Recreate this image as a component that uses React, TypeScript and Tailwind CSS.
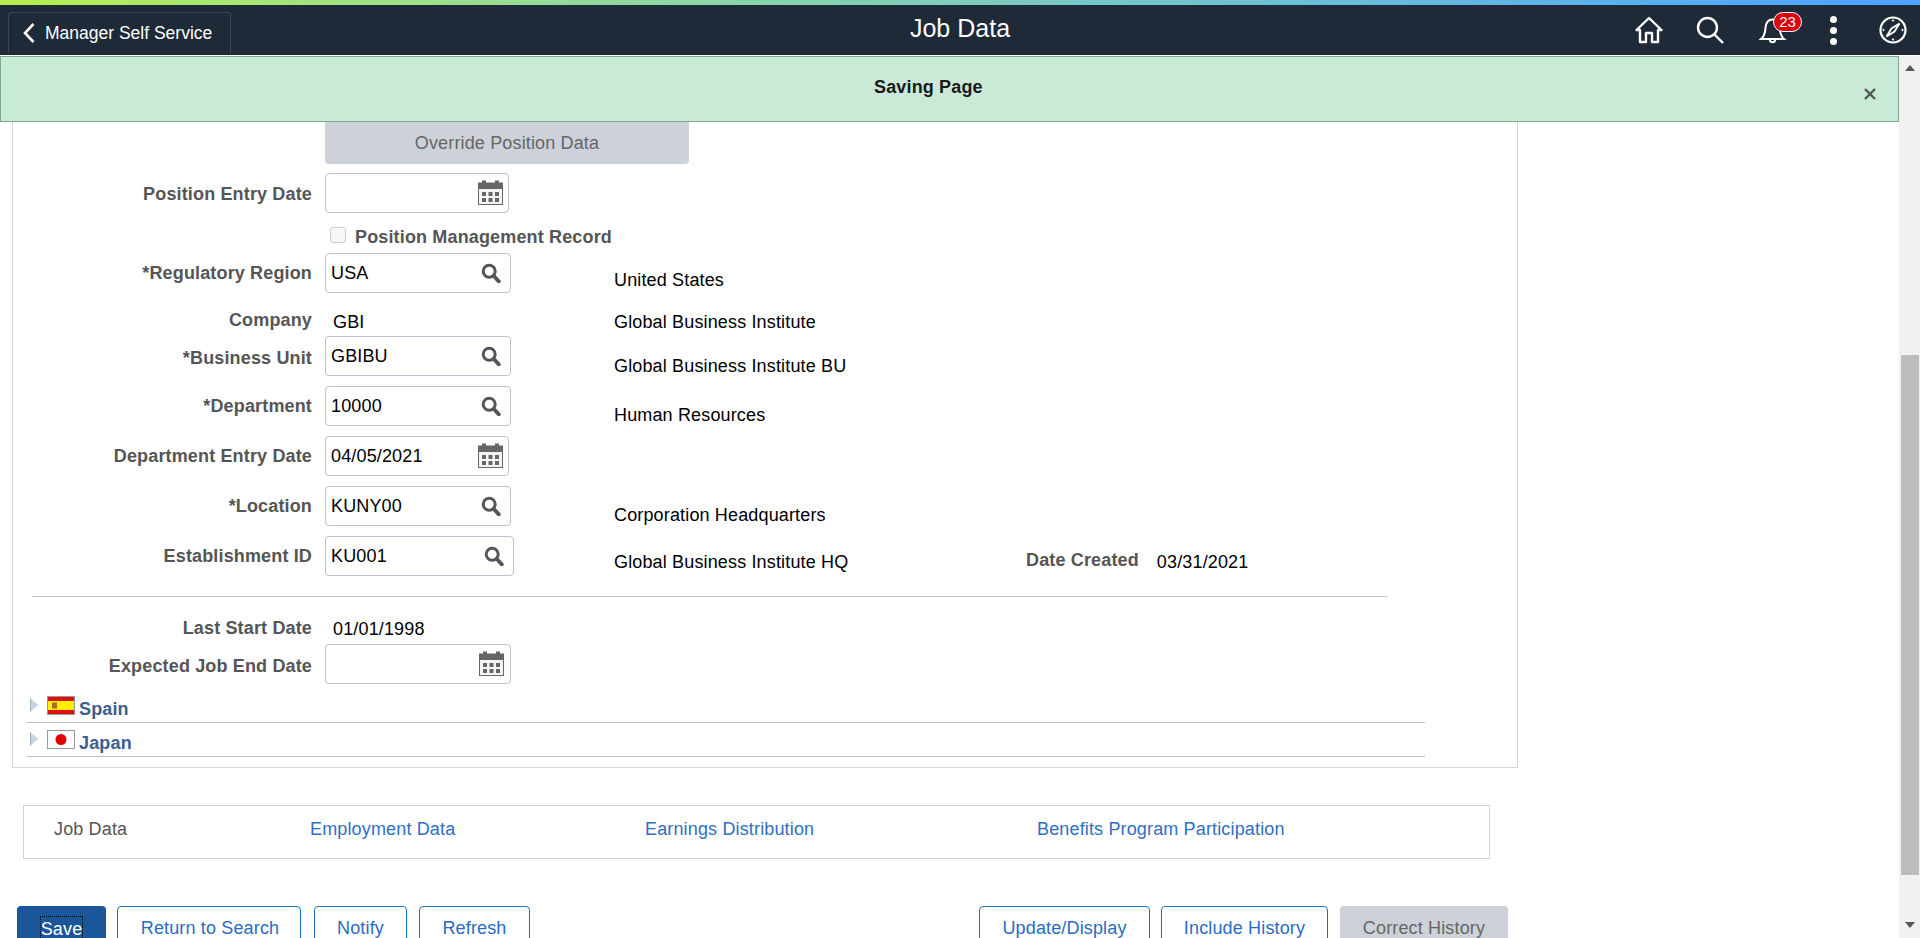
import React from "react";

const SearchIcon = () => (
  <svg width="20" height="20" viewBox="0 0 20 20" fill="none" stroke="#555555">
    <circle cx="8.2" cy="8.2" r="6" strokeWidth="3" />
    <line x1="12.6" y1="12.8" x2="17.8" y2="18.4" strokeWidth="3.8" strokeLinecap="round" />
  </svg>
);

const CalendarIcon = () => (
  <svg width="25" height="25" viewBox="0 0 25 25" className="mb-[2px]">
    <rect x="0.5" y="3" width="24" height="21.5" fill="#f4f4f4" stroke="#666666" />
    <rect x="0" y="3" width="25" height="6" fill="#666666" />
    <rect x="4" y="0.5" width="4" height="4" fill="#666666" />
    <rect x="17" y="0.5" width="4" height="4" fill="#666666" />
    {[4, 10.5, 17].map((x) =>
      [12, 18].map((y) => <rect key={`${x}-${y}`} x={x} y={y} width="4" height="4" fill="#666666" />)
    )}
  </svg>
);

const Field = ({
  value = "",
  icon,
  width,
  pad = "pr-[9px]",
}: {
  value?: string;
  icon: React.ReactNode;
  width: string;
  pad?: string;
}) => (
  <div className={`${width} ${pad} h-[40px] flex items-center justify-between border border-[#b9c2cf] rounded-[4px] bg-white pl-[5px] shrink-0`}>
    <span className="text-[18px] text-black">{value}</span>
    {icon}
  </div>
);

const Label = ({ children, cls = "" }: { children: React.ReactNode; cls?: string }) => (
  <div className={`w-[299px] shrink-0 text-right text-[18px] font-bold text-[#555555] mr-[13px] ${cls}`}>{children}</div>
);

const Row = ({
  label,
  labelCls,
  children,
  text,
}: {
  label: string;
  labelCls?: string;
  children: React.ReactNode;
  text?: React.ReactNode;
}) => (
  <div className="flex items-center h-[40px]">
    <Label cls={labelCls}>{label}</Label>
    <div className="w-[289px] shrink-0">{children}</div>
    {text}
  </div>
);

const Side = ({ children, cls = "mt-[18px]" }: { children: React.ReactNode; cls?: string }) => (
  <div className={`text-[18px] text-black ${cls}`}>{children}</div>
);

const Arrow = () => (
  <svg width="9" height="14" viewBox="0 0 9 14" className="shrink-0">
    <path d="M0.5 0.5 L8.5 7 L0.5 13.5 Z" fill="#c4d6e3" />
    <path d="M0.5 0.5 V13.5" stroke="#8fb0c6" strokeWidth="1" />
  </svg>
);

const SpainFlag = () => (
  <svg width="28" height="19" viewBox="0 0 28 19" className="shrink-0">
    <rect width="28" height="19" fill="#999999" />
    <rect x="1" y="1" width="26" height="17" fill="#dd1111" />
    <rect x="1" y="5" width="26" height="9" fill="#ffee00" />
    <rect x="5" y="6.5" width="5" height="6" fill="#a8701a" />
  </svg>
);

const JapanFlag = () => (
  <svg width="28" height="19" viewBox="0 0 28 19" className="shrink-0">
    <rect x="0.5" y="0.5" width="27" height="18" fill="#ffffff" stroke="#999999" />
    <circle cx="14" cy="9.5" r="5.5" fill="#e00000" />
  </svg>
);

const Outline = ({ children, w }: { children: React.ReactNode; w: string }) => (
  <button className={`${w} h-[44px] shrink-0 border border-[#1b6fc9] rounded-[4px] bg-white text-[18px] text-[#2a6bc4]`}>
    {children}
  </button>
);

export default function App() {
  return (
    <div className="h-[938px] w-[1920px] overflow-hidden flex flex-col bg-white tracking-[0.15px] font-['Liberation_Sans',Arial,sans-serif]">
      <div className="h-[5px] shrink-0 bg-linear-to-r from-[#b5ee4c] to-[#4ea1ff]" />
      <header className="h-[50px] shrink-0 bg-[#1e2a38] grid grid-cols-[1fr_auto_1fr] items-center tracking-normal">
        <div className="flex">
          <div className="ml-[8px] mt-[5px] w-[223px] h-[41px] flex items-center border border-b-0 border-[#3b4757] rounded-t-[4px] pl-[13px] text-white">
            <svg width="14" height="22" viewBox="0 0 14 22" fill="none" stroke="#ffffff" strokeWidth="2.6" className="mr-[9px]">
              <path d="M11.5 2 L3 11 L11.5 20" />
            </svg>
            <span className="text-[17.5px]">Manager Self Service</span>
          </div>
        </div>
        <div className="text-[25px] text-white pb-[2px]">Job Data</div>
        <div className="flex justify-end items-center pr-[13px]">
          <svg width="28" height="28" viewBox="0 0 28 28" fill="none" stroke="#ffffff" strokeWidth="2.4" strokeLinejoin="round">
            <path d="M1.5 14 L14 2 L26.5 14 L23 14 L23 26 L17 26 L17 17 L11 17 L11 26 L5 26 L5 14 Z" />
          </svg>
          <svg width="28" height="28" viewBox="0 0 28 28" fill="none" stroke="#ffffff" strokeWidth="2.4" className="ml-[33px]">
            <circle cx="11.5" cy="11.5" r="9.5" />
            <line x1="18.5" y1="18.5" x2="27" y2="27" />
          </svg>
          <div className="relative w-[28px] h-[28px] ml-[35px]">
            <svg width="28" height="28" viewBox="0 0 28 28" fill="none" stroke="#ffffff" strokeWidth="2">
              <path d="M2 23 C6 20 6 16 6.5 12 C7 6 10 3.5 13.5 3.5 C17 3.5 20 6 20.5 12 C21 16 21.5 20 25 23 Z" />
              <path d="M11 24 C11 27 16 27 16 24" />
            </svg>
            <div className="absolute left-[14px] top-[-4px] w-[29px] h-[20px] rounded-full bg-[#e0000b] border border-white text-white text-[15px] leading-[18px] text-center">
              23
            </div>
          </div>
          <div className="w-[28px] flex flex-col items-center gap-[4px] ml-[32px]">
            <div className="w-[7px] h-[7px] rounded-full bg-white" />
            <div className="w-[7px] h-[7px] rounded-full bg-white" />
            <div className="w-[7px] h-[7px] rounded-full bg-white" />
          </div>
          <svg width="28" height="28" viewBox="0 0 28 28" fill="none" stroke="#ffffff" className="ml-[32px]">
            <circle cx="14" cy="14" r="12.5" strokeWidth="2.2" />
            <path d="M20.5 7.5 L15.5 15.5 L7.5 20.5 L12.5 12.5 Z" strokeWidth="1.8" />
            <circle cx="14" cy="4.5" r="0.7" fill="#ffffff" />
            <circle cx="14" cy="23.5" r="0.7" fill="#ffffff" />
            <circle cx="4.5" cy="14" r="0.7" fill="#ffffff" />
            <circle cx="23.5" cy="14" r="0.7" fill="#ffffff" />
          </svg>
        </div>
      </header>
      <div className="h-px shrink-0 bg-white" />
      <div className="flex flex-1 min-h-0">
        <main className="w-[1899px] shrink-0 overflow-hidden">
          <div className="h-[66px] border border-[#7aa98d] bg-[#c9ead7] flex items-center pl-[873px] pr-[22px] justify-between">
            <span className="text-[18px] font-bold text-[#1a1a1a] pb-[4px]">Saving Page</span>
            <svg width="12" height="12" viewBox="0 0 12 12" stroke="#555555" strokeWidth="2.4" className="mt-[10px]">
              <line x1="1" y1="1" x2="11" y2="11" />
              <line x1="11" y1="1" x2="1" y2="11" />
            </svg>
          </div>

          <section className="ml-[12px] w-[1506px] h-[646px] border-l border-r border-b border-[#d3d6da]">
            <div className="ml-[312px] w-[364px] h-[42px] rounded-b-[4px] bg-[#cdd1d9] text-[18px] text-[#666666] flex items-center justify-center">
              Override Position Data
            </div>
            <div className="mt-[9px]">
              <Row label="Position Entry Date" labelCls="pt-[2px]">
                <Field icon={<CalendarIcon />} width="w-[184px]" pad="pr-[5px]" />
              </Row>
              <div className="flex items-center h-[40px] ml-[317px]">
                <div className="w-[16px] h-[16px] border border-[#cccccc] rounded-[3px] bg-[#f7f7f7] mt-[4px]" />
                <span className="ml-[9px] mt-[8px] text-[18px] font-bold text-[#555555]">Position Management Record</span>
              </div>
              <Row label="*Regulatory Region" labelCls="pt-[1px]" text={<Side cls="mt-[14px]">United States</Side>}>
                <Field value="USA" icon={<SearchIcon />} width="w-[186px]" />
              </Row>
              <div className="flex items-center h-[43px] pt-[10px]">
                <Label cls="pt-[2px]">Company</Label>
                <div className="w-[289px] shrink-0 pl-[8px] text-[18px] text-black mt-[5px]">GBI</div>
                <Side cls="mt-[5px]">Global Business Institute</Side>
              </div>
              <Row label="*Business Unit" labelCls="pt-[4px]" text={<Side cls="mt-[20px]">Global Business Institute BU</Side>}>
                <Field value="GBIBU" icon={<SearchIcon />} width="w-[186px]" />
              </Row>
              <div className="mt-[10px]">
                <Row label="*Department" text={<Side>Human Resources</Side>}>
                  <Field value="10000" icon={<SearchIcon />} width="w-[186px]" />
                </Row>
              </div>
              <div className="mt-[10px]">
                <Row label="Department Entry Date">
                  <Field value="04/05/2021" icon={<CalendarIcon />} width="w-[184px]" pad="pr-[5px]" />
                </Row>
              </div>
              <div className="mt-[10px]">
                <Row label="*Location" text={<Side>Corporation Headquarters</Side>}>
                  <Field value="KUNY00" icon={<SearchIcon />} width="w-[186px]" />
                </Row>
              </div>
              <div className="mt-[10px]">
                <Row
                  label="Establishment ID"
                  text={
                    <div className="flex items-center mt-[12px]">
                      <div className="w-[412px] text-[18px] text-black">Global Business Institute HQ</div>
                      <div className="text-[18px] font-bold text-[#555555] mb-[3px]">Date Created</div>
                      <div className="ml-[18px] text-[18px] text-black">03/31/2021</div>
                    </div>
                  }
                >
                  <Field value="KU001" icon={<SearchIcon />} width="w-[189px]" />
                </Row>
              </div>
            </div>
            <div className="mt-[20px] ml-[19px] w-[1356px] h-px bg-[#c4c6c9]" />
            <div className="flex items-center h-[34px] mt-[13px]">
              <Label cls="pt-[2px]">Last Start Date</Label>
              <div className="pl-[8px] text-[18px] text-black mt-[4px]">01/01/1998</div>
            </div>
            <Row label="Expected Job End Date" labelCls="pt-[4px]">
              <Field icon={<CalendarIcon />} width="w-[186px]" pad="pr-[6px]" />
            </Row>
            <div className="ml-[14px] w-[1398px] mt-[11px]">
              <div className="h-[28px] border-b border-[#bbbdbf] flex items-start pl-[3px]">
                <div className="mt-[3px]">
                  <Arrow />
                </div>
                <div className="ml-[8px] mt-[1px]">
                  <SpainFlag />
                </div>
                <span className="ml-[4px] mt-[1px] text-[18px] font-bold text-[#3b5f8f]">Spain</span>
              </div>
              <div className="h-[34px] border-b border-[#bbbdbf] flex items-start pl-[3px] pt-[6px]">
                <div className="mt-[3px]">
                  <Arrow />
                </div>
                <div className="ml-[8px] mt-[1px]">
                  <JapanFlag />
                </div>
                <span className="ml-[4px] mt-[1px] text-[18px] font-bold text-[#3b5f8f]">Japan</span>
              </div>
            </div>
          </section>

          <nav className="mt-[37px] ml-[23px] w-[1467px] h-[54px] border border-[#d0d5da] flex items-center pl-[30px] pb-[6px] text-[18px]">
            <span className="w-[256px] text-[#555555]">Job Data</span>
            <span className="w-[335px] text-[#2f6fc4]">Employment Data</span>
            <span className="w-[392px] text-[#2f6fc4]">Earnings Distribution</span>
            <span className="text-[#2f6fc4]">Benefits Program Participation</span>
          </nav>

          <div className="mt-[47px] ml-[17px] flex items-start">
            <button className="w-[89px] h-[44px] shrink-0 rounded-[4px] bg-[#1a5699] text-[18px] text-white pt-[10px] flex justify-center">
              <span className="border border-dotted border-black leading-[24px] h-[30px]">Save</span>
            </button>
            <div className="ml-[11px]">
              <Outline w="w-[184px] pl-[2px]">Return to Search</Outline>
            </div>
            <div className="ml-[13px]">
              <Outline w="w-[93px]">Notify</Outline>
            </div>
            <div className="ml-[12px]">
              <Outline w="w-[111px]">Refresh</Outline>
            </div>
            <div className="ml-[449px]">
              <Outline w="w-[171px]">Update/Display</Outline>
            </div>
            <div className="ml-[11px]">
              <Outline w="w-[167px]">Include History</Outline>
            </div>
            <button className="ml-[12px] w-[168px] h-[44px] shrink-0 rounded-[4px] bg-[#cdd1d9] text-[18px] text-[#666666]">
              Correct History
            </button>
          </div>
        </main>

        <aside className="w-[21px] shrink-0 bg-[#f1f1f1] flex flex-col items-center">
          <svg width="10" height="6" viewBox="0 0 10 6" className="mt-[9px]">
            <path d="M5 0 L10 6 L0 6 Z" fill="#555555" />
          </svg>
          <div className="mt-[284px] w-[18px] h-[520px] bg-[#bcbcbc]" />
          <svg width="10" height="6" viewBox="0 0 10 6" className="mt-[47px]">
            <path d="M5 6 L10 0 L0 0 Z" fill="#555555" />
          </svg>
        </aside>
      </div>
    </div>
  );
}
